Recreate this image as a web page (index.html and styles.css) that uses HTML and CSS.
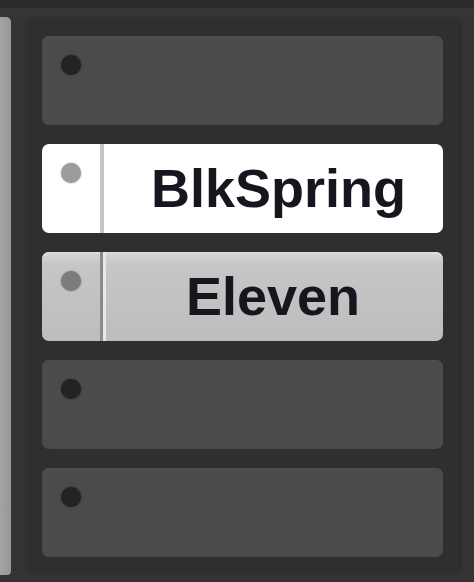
FILE: index.html
```html
<!DOCTYPE html>
<html>
<head>
<meta charset="utf-8">
<link rel="stylesheet" href="styles.css">
</head>
<body>
<div class="screen">
  <div class="strip"></div>
  <div class="panel">
    <div class="slot empty"><div class="lead"><span class="dot"></span></div></div>
    <div class="slot active"><div class="lead"><span class="dot"></span></div><div class="label">BlkSpring</div></div>
    <div class="slot filled"><div class="lead"><span class="dot"></span></div><div class="label">Eleven</div></div>
    <div class="slot empty"><div class="lead"><span class="dot"></span></div></div>
    <div class="slot empty"><div class="lead"><span class="dot"></span></div></div>
  </div>
</div>
</body>
</html>
```
FILE: styles.css
```css
html, body {
  margin: 0;
  padding: 0;
  background: #333333;
}
.screen {
  width: 474px;
  height: 582px;
  display: flex;
  background: linear-gradient(#2b2b2b 0, #2b2b2b 7px, #363636 9px, #333333 20px);
  overflow: hidden;
}
.strip {
  width: 11px;
  margin: 17px 0 7px 0;
  background: linear-gradient(90deg, #a4a4a4, #969696);
  border-radius: 0 5px 4px 0;
  flex: none;
}
.panel {
  margin: 22px 0 12px 19px;
  width: 401px;
  padding: 14px 15px 12px 12px;
  background: #2f2f2f;
  box-shadow: 4px 0 0 #2c2c2c, 0 0 6px rgba(0,0,0,0.25);
  display: flex;
  flex-direction: column;
  gap: 19px;
}
.slot {
  height: 89px;
  border-radius: 7px;
  display: flex;
  flex: none;
}
.lead {
  width: 62px;
  padding: 19px 0 0 19px;
  box-sizing: border-box;
  flex: none;
}
.dot {
  display: block;
  width: 20px;
  height: 20px;
  border-radius: 50%;
}
.empty {
  background: #4b4b4b;
  box-shadow: inset 0 1px 0 #4f4f4f;
}
.empty .dot {
  background: #232323;
  box-shadow: 0 0 2px #232323;
}
.active {
  background: #ffffff;
}
.active .lead {
  border-right: 4px solid #c4c4c4;
}
.active .dot {
  background: #9c9c9c;
  box-shadow: 0 0 2px #9c9c9c;
}
.filled {
  background: linear-gradient(#d6d6d6, #c6c6c6 15%, #bdbdbd);
  box-shadow: inset 0 2px 0 #dcdcdc;
}
.filled .lead {
  width: 61px;
  border-right: 3px solid #8a8a8a;
  box-shadow: 3px 0 0 #e8e8e8;
}
.filled .dot {
  background: #7c7c7c;
  box-shadow: 0 0 2px #7c7c7c;
}
.label {
  flex: 1;
  text-align: center;
  font-family: "Liberation Sans", Arial, sans-serif;
  font-weight: bold;
  font-size: 54px;
  line-height: 89px;
  color: #16161f;
}
.active .label {
  padding-left: 10px;
}
```
